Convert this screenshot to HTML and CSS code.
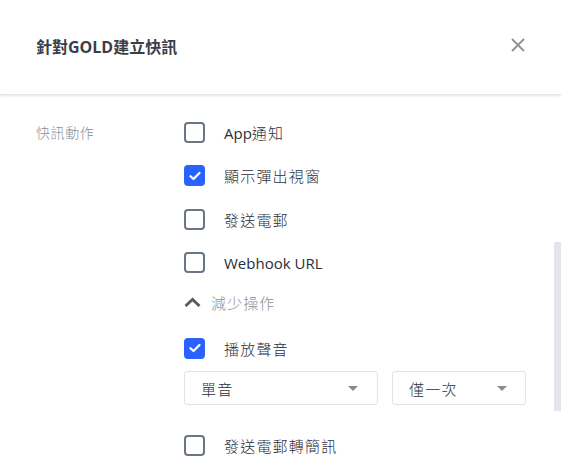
FILE: index.html
```html
<!DOCTYPE html>
<html lang="zh-Hant">
<head>
<meta charset="utf-8">
<link rel="stylesheet" href="styles.css">
</head>
<body>
<div class="dialog">
  <header class="head">
    <h1 class="title">針對GOLD建立快訊</h1>
    <svg class="close" width="16" height="16" viewBox="0 0 16 16"><path d="M2 2L14 14M14 2L2 14" stroke="#8e9099" stroke-width="1.8" fill="none"/></svg>
  </header>
  <main class="body">
    <div class="label">快訊動作</div>
    <div class="options">
      <div class="row"><span class="box"></span><span class="text">App<span class="cjk">通知</span></span></div>
      <div class="row"><span class="box checked"><svg width="12" height="10" viewBox="0 0 12 10"><path d="M1.5 5.2L4.5 8L10.5 2" stroke="#fff" stroke-width="2.2" fill="none" stroke-linecap="round" stroke-linejoin="round"/></svg></span><span class="text cjk">顯示彈出視窗</span></div>
      <div class="row"><span class="box"></span><span class="text cjk">發送電郵</span></div>
      <div class="row"><span class="box"></span><span class="text">Webhook URL</span></div>
      <div class="toggle"><svg width="17" height="10" viewBox="0 0 17 10"><path d="M1.5 9L8.5 2.4L15.5 9" stroke="#555b66" stroke-width="2.8" fill="none"/></svg><span>減少操作</span></div>
      <div class="row sound"><span class="box checked"><svg width="12" height="10" viewBox="0 0 12 10"><path d="M1.5 5.2L4.5 8L10.5 2" stroke="#fff" stroke-width="2.2" fill="none" stroke-linecap="round" stroke-linejoin="round"/></svg></span><span class="text cjk">播放聲音</span></div>
      <div class="selects">
        <div class="select wide"><span>單音</span><span class="caret"></span></div>
        <div class="select narrow"><span>僅一次</span><span class="caret"></span></div>
      </div>
      <div class="row last"><span class="box"></span><span class="text cjk">發送電郵轉簡訊</span></div>
    </div>
  </main>
  <div class="scrollbar"></div>
</div>
</body>
</html>
```

FILE: styles.css
```css
html, body {
  margin: 0;
  padding: 0;
  background: #fff;
}
body {
  font-family: "Open Sans", "Noto Sans CJK TC", sans-serif;
  color: #2a2e39;
  overflow: hidden;
}
.dialog {
  position: relative;
  width: 561px;
  height: 471px;
  overflow: hidden;
}
.head {
  height: 94px;
  display: flex;
  align-items: center;
  justify-content: space-between;
  padding: 0 36px 0 36px;
  box-shadow: 0 1px 2px rgba(40, 40, 80, 0.12);
  border-bottom: 1px solid #e6e6ee;
  position: relative;
  z-index: 1;
}
.title {
  margin: 0;
  font-size: 16px;
  font-weight: 700;
  color: #3b3e47;
  font-family: "Open Sans", "Noto Sans CJK TC", sans-serif;
  padding-bottom: 3px;
}
.close {
  margin-right: -1px;
  padding-bottom: 4px;
}
.body {
  display: flex;
  padding: 26px 0 0 36px;
}
.label {
  width: 148px;
  font-size: 14px;
  font-weight: 300;
  letter-spacing: 0.6px;
  color: #8b8f97;
  line-height: 22px;
  font-family: "Noto Sans CJK TC", sans-serif;
}
.options {
  display: flex;
  flex-direction: column;
}
.row {
  display: flex;
  align-items: center;
  height: 22px;
  margin-bottom: 21.5px;
}
.box {
  box-sizing: border-box;
  width: 21px;
  height: 21px;
  border: 2px solid #6a7685;
  border-radius: 4px;
  margin-right: 19px;
  display: flex;
  align-items: center;
  justify-content: center;
}
.box.checked {
  border-color: #2962ff;
  background: #2962ff;
}
.text {
  font-size: 15px;
  color: #2a2e39;
}
.cjk {
  font-weight: 300;
  letter-spacing: 1.2px;
}
.toggle {
  display: flex;
  align-items: center;
  height: 20px;
  margin-top: -3px;
  margin-bottom: 25px;
  font-size: 15px;
  font-weight: 300;
  letter-spacing: 1.1px;
  color: #8b8f97;
  font-family: "Noto Sans CJK TC", sans-serif;
}
.toggle svg {
  margin-left: 0;
  margin-right: 10px;
}
.row.sound {
  margin-bottom: 12px;
}
.selects {
  display: flex;
  gap: 14px;
  margin-bottom: 31px;
}
.select {
  box-sizing: border-box;
  height: 34px;
  border: 1px solid #e0e3eb;
  border-radius: 3px;
  display: flex;
  align-items: center;
  justify-content: space-between;
  padding: 0 19px 0 16px;
  font-size: 15px;
  font-weight: 300;
  letter-spacing: 1.2px;
  color: #2a2e39;
  font-family: "Noto Sans CJK TC", sans-serif;
}
.select.wide {
  width: 194px;
}
.select.narrow {
  width: 134px;
  padding-right: 18px;
}
.caret {
  width: 0;
  height: 0;
  border-left: 5px solid transparent;
  border-right: 5px solid transparent;
  border-top: 5px solid #878b94;
}
.row.last {
  margin-top: -2px;
  margin-bottom: 0;
}
.scrollbar {
  position: absolute;
  left: 554px;
  top: 242px;
  width: 7px;
  height: 169px;
  background: #e4e4ea;
}
```
